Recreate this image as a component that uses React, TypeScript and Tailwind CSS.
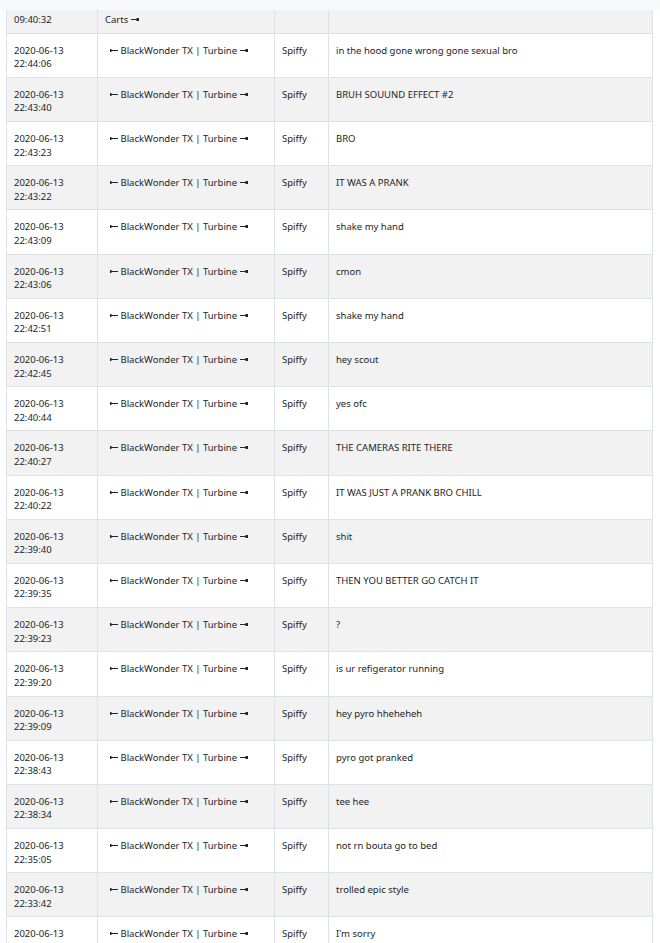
const rows: [string, string][] = [
  ['22:44:06', 'in the hood gone wrong gone sexual bro'],
  ['22:43:40', 'BRUH SOUUND EFFECT #2'],
  ['22:43:23', 'BRO'],
  ['22:43:22', 'IT WAS A PRANK'],
  ['22:43:09', 'shake my hand'],
  ['22:43:06', 'cmon'],
  ['22:42:51', 'shake my hand'],
  ['22:42:45', 'hey scout'],
  ['22:40:44', 'yes ofc'],
  ['22:40:27', 'THE CAMERAS RITE THERE'],
  ['22:40:22', 'IT WAS JUST A PRANK BRO CHILL'],
  ['22:39:40', 'shit'],
  ['22:39:35', 'THEN YOU BETTER GO CATCH IT'],
  ['22:39:23', '?'],
  ['22:39:20', 'is ur refigerator running'],
  ['22:39:09', 'hey pyro hheheheh'],
  ['22:38:43', 'pyro got pranked'],
  ['22:38:34', 'tee hee'],
  ['22:35:05', 'not rn bouta go to bed'],
  ['22:33:42', 'trolled epic style'],
  ['22:31:17', "I'm sorry"],
]

function BarLeft() {
  return (
    <svg width="8" height="5" viewBox="0 0 8 5" className="inline-block align-[1px]">
      <rect x="0" y="1" width="1.5" height="3" fill="#212529" />
      <rect x="1" y="2" width="7" height="1" fill="#212529" />
    </svg>
  )
}

function BarRight() {
  return (
    <svg width="8" height="5" viewBox="0 0 8 5" className="inline-block align-[1px]">
      <rect x="0" y="2" width="6" height="1" fill="#212529" />
      <rect x="5.5" y="1" width="2.5" height="3" fill="#212529" />
    </svg>
  )
}

const td = 'border border-[#dee2e6] align-top pt-[10px] pb-0 px-[7px]'

export default function App() {
  return (
    <div
      className="w-[660px] h-[943px] overflow-hidden bg-white text-[#212529] text-[9.5px] leading-[13.5px]"
      style={{ fontFamily: '"Noto Sans", "Open Sans", sans-serif' }}
    >
      <div className="h-[10px] bg-[#f8f9fa]" />
      <div className="h-[933px] overflow-hidden pl-[6px]">
        <table className="border-collapse table-fixed w-[647px] -mt-[21.5px]">
          <colgroup>
            <col className="w-[91px]" />
            <col className="w-[177px]" />
            <col className="w-[54px]" />
            <col />
          </colgroup>
          <tbody>
            <tr className="h-[44.2px] bg-[#f2f2f2]">
              <td className={td}>
                2020-06-13
                <br />
                09:40:32
              </td>
              <td className={td}>
                {'\u00a0'}
                <br />
                Carts <BarRight />
              </td>
              <td className={td}></td>
              <td className={td}></td>
            </tr>
            {rows.map(([time, msg], i) => (
              <tr key={i} className={`h-[44.2px] ${i % 2 === 0 ? 'bg-white' : 'bg-[#f2f2f2]'}`}>
                <td className={td}>
                  2020-06-13
                  <br />
                  {time}
                </td>
                <td className={td}>
                  <span className="pl-[5px]">
                    <BarLeft /> BlackWonder TX | Turbine <BarRight />
                  </span>
                </td>
                <td className={td}>Spiffy</td>
                <td className={td}>{msg}</td>
              </tr>
            ))}
          </tbody>
        </table>
      </div>
    </div>
  )
}
